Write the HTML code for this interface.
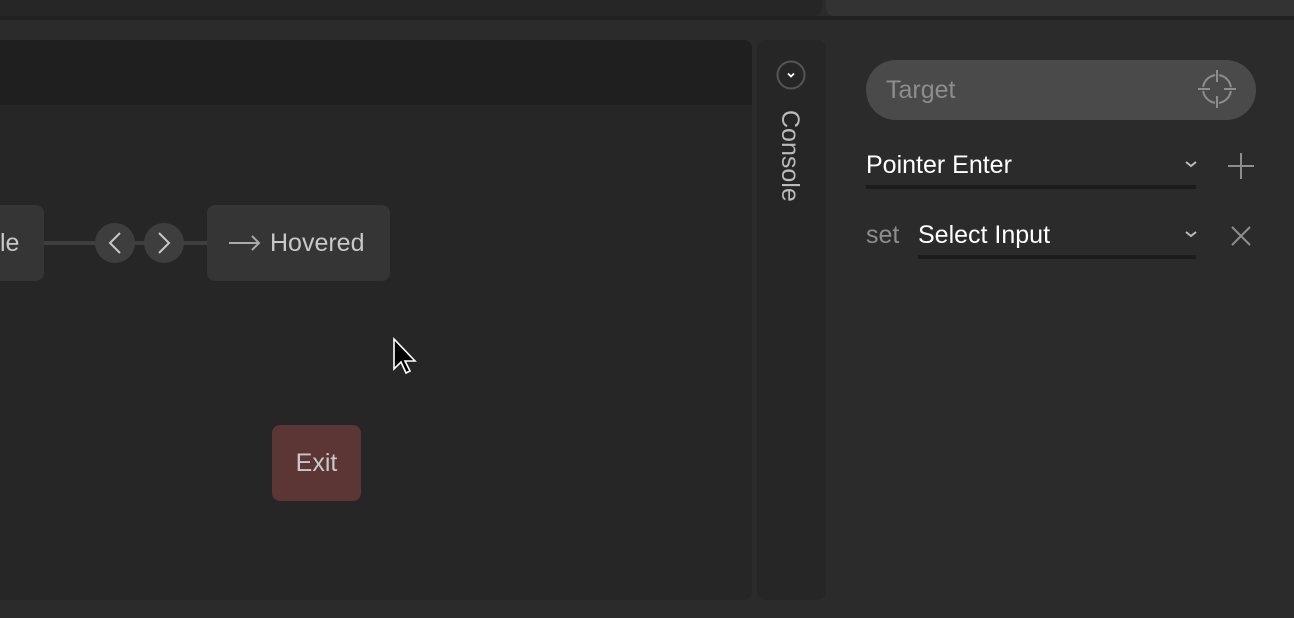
<!DOCTYPE html>
<html><head><meta charset="utf-8"><style>
*{box-sizing:border-box;margin:0;padding:0}
body{width:1294px;height:618px;background:#2b2b2b;overflow:hidden;position:relative;font-family:"Liberation Sans",sans-serif}
.a{position:absolute}
</style></head><body>
<div class="a" style="left:0;top:16px;width:1294px;height:4px;background:#212121"></div>
<div class="a" style="left:0;top:0;width:822px;height:16px;background:#262626;border-bottom-right-radius:8px"></div>
<div class="a" style="left:826px;top:0;width:468px;height:16px;background:#333;border-bottom-left-radius:8px"></div>

<div class="a" style="left:0;top:40px;width:752px;height:560px;background:#262626;border-radius:0 8px 8px 0;overflow:hidden">
  <div class="a" style="left:0;top:0;width:752px;height:65px;background:#1f1f1f"></div>
</div>

<div class="a" style="left:757px;top:40px;width:69px;height:560px;background:#262626;border-radius:8px"></div>
<svg class="a" style="left:776px;top:60px" width="30" height="30"><circle cx="15" cy="15" r="13.5" fill="none" stroke="#555" stroke-width="2"/><path d="M12 13.5l3 3 3-3" fill="none" stroke="#fff" stroke-width="1.8"/></svg>
<div class="a" style="top:110px;transform:rotate(90deg);transform-origin:0 0;color:#bbb;font-size:25px;white-space:nowrap;left:804px">Console</div>

<div class="a" style="left:-20px;top:205px;width:64px;height:76px;background:#353535;border-radius:8px"></div>
<div class="a" style="left:0;top:229px;color:#c8c8c8;font-size:25px">le</div>
<div class="a" style="left:44px;top:241px;width:164px;height:4px;background:#3e3e3e"></div>
<svg class="a" style="left:95px;top:223px" width="90" height="40">
<circle cx="20" cy="20" r="20" fill="#3e3e3e"/><circle cx="69" cy="20" r="20" fill="#3e3e3e"/>
<path d="M25 10l-10 10 10 10" fill="none" stroke="#c8c8c8" stroke-width="2"/>
<path d="M64 10l10 10-10 10" fill="none" stroke="#c8c8c8" stroke-width="2"/></svg>
<div class="a" style="left:207px;top:205px;width:183px;height:76px;background:#353535;border-radius:8px"></div>
<svg class="a" style="left:228px;top:235px" width="34" height="16"><path d="M1 8h30M24 1l7 7-7 7" fill="none" stroke="#aaa" stroke-width="2"/></svg>
<div class="a" style="left:270px;top:229px;color:#c8c8c8;font-size:25px">Hovered</div>

<div class="a" style="left:272px;top:425px;width:89px;height:76px;background:#5c3535;border-radius:8px;color:#c8c8c8;font-size:25px;text-align:center;line-height:76px">Exit</div>

<svg class="a" style="left:392px;top:337px" width="26" height="38"><path d="M2 2v30l7-7 5 11 4-2-5-10h10z" fill="#000" stroke="#fff" stroke-width="1.6"/></svg>

<div class="a" style="left:866px;top:60px;width:390px;height:60px;background:#4a4a4a;border-radius:30px"></div>
<div class="a" style="left:886px;top:76px;color:#8d8d8d;font-size:25px">Target</div>
<svg class="a" style="left:1196px;top:68px" width="42" height="42"><g fill="none" stroke="#8d8d8d" stroke-width="2"><circle cx="21" cy="21" r="14" stroke-dasharray="18 4" stroke-dashoffset="-2"/><path d="M21 2v12M21 28v12M2 21h12M28 21h12"/></g></svg>

<div class="a" style="left:866px;top:151px;color:#fff;font-size:25px">Pointer Enter</div>
<svg class="a" style="left:1184px;top:160px" width="14" height="10"><path d="M2 2l5 4 5-4" fill="none" stroke="#bbb" stroke-width="2"/></svg>
<div class="a" style="left:866px;top:185px;width:330px;height:4px;background:#1c1c1c"></div>
<svg class="a" style="left:1226px;top:151px" width="30" height="30"><path d="M15 2v26M2 15h26" stroke="#8d8d8d" stroke-width="2"/></svg>

<div class="a" style="left:866px;top:221px;color:#8d8d8d;font-size:25px">set</div>
<div class="a" style="left:918px;top:221px;color:#fff;font-size:25px">Select Input</div>
<svg class="a" style="left:1184px;top:230px" width="14" height="10"><path d="M2 2l5 4 5-4" fill="none" stroke="#bbb" stroke-width="2"/></svg>
<div class="a" style="left:918px;top:255px;width:278px;height:4px;background:#1c1c1c"></div>
<svg class="a" style="left:1229px;top:224px" width="24" height="24"><path d="M3 3l18 18M21 3L3 21" stroke="#8d8d8d" stroke-width="2"/></svg>
</body></html>
